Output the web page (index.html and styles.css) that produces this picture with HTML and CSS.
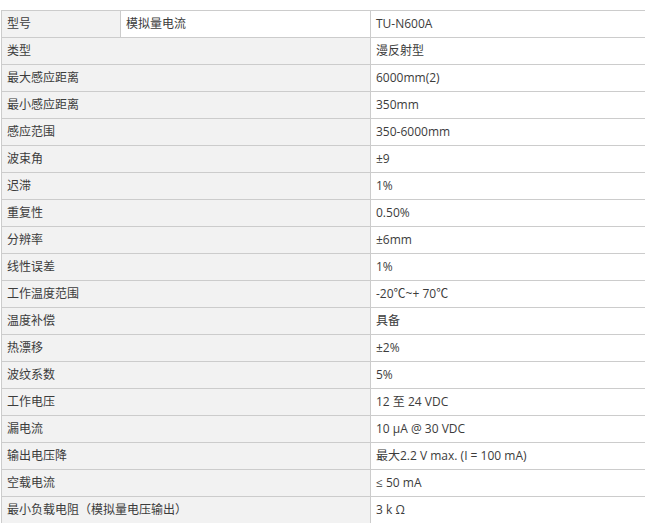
FILE: index.html
```html
<!DOCTYPE html>
<html lang="zh">
<head>
<meta charset="utf-8">
<link rel="stylesheet" href="styles.css">
</head>
<body>
<div class="page">
<table class="spec">
<colgroup><col class="c1"><col class="c2"><col class="c3"></colgroup>
<tbody>
<tr><td class="lab">型号</td><td>模拟量电流</td><td>TU-N600A</td></tr>
<tr><td class="lab" colspan="2">类型</td><td>漫反射型</td></tr>
<tr><td class="lab" colspan="2">最大感应距离</td><td>6000mm(2)</td></tr>
<tr><td class="lab" colspan="2">最小感应距离</td><td>350mm</td></tr>
<tr><td class="lab" colspan="2">感应范围</td><td>350-6000mm</td></tr>
<tr><td class="lab" colspan="2">波束角</td><td>±9</td></tr>
<tr><td class="lab" colspan="2">迟滞</td><td>1%</td></tr>
<tr><td class="lab" colspan="2">重复性</td><td>0.50%</td></tr>
<tr><td class="lab" colspan="2">分辨率</td><td>±6mm</td></tr>
<tr><td class="lab" colspan="2">线性误差</td><td>1%</td></tr>
<tr><td class="lab" colspan="2">工作温度范围</td><td>-20℃~+ 70℃</td></tr>
<tr><td class="lab" colspan="2">温度补偿</td><td>具备</td></tr>
<tr><td class="lab" colspan="2">热漂移</td><td>±2%</td></tr>
<tr><td class="lab" colspan="2">波纹系数</td><td>5%</td></tr>
<tr><td class="lab" colspan="2">工作电压</td><td>12 至 24 VDC</td></tr>
<tr><td class="lab" colspan="2">漏电流</td><td>10 µA @ 30 VDC</td></tr>
<tr><td class="lab" colspan="2">输出电压降</td><td>最大2.2 V max. (I = 100 mA)</td></tr>
<tr><td class="lab" colspan="2">空载电流</td><td>≤ 50 mA</td></tr>
<tr><td class="lab" colspan="2">最小负载电阻（模拟量电压输出）</td><td>3 k Ω</td></tr>
</tbody>
</table>
</div>
</body>
</html>
```
FILE: styles.css
```css
html, body {
  margin: 0;
  padding: 0;
  background: #fff;
  overflow: hidden;
}
.page {
  padding: 10px 0 0 1px;
  width: 644px;
  height: 513px;
  overflow: hidden;
}
.spec {
  border-collapse: collapse;
  table-layout: fixed;
  width: 690px;
  font-family: "Segoe UI", "Open Sans", "Noto Sans CJK SC", sans-serif;
  font-size: 12px;
  color: #3c3c3c;
}
.c1 { width: 119px; }
.c2 { width: 250px; }
.c3 { width: 321px; }
.spec td {
  border: 1px solid #ccc;
  height: 27px;
  padding: 0 4px 0 5px;
  box-sizing: border-box;
  line-height: 16px;
  vertical-align: middle;
  white-space: nowrap;
}
.spec td.lab {
  background: #f2f2f2;
}
```
